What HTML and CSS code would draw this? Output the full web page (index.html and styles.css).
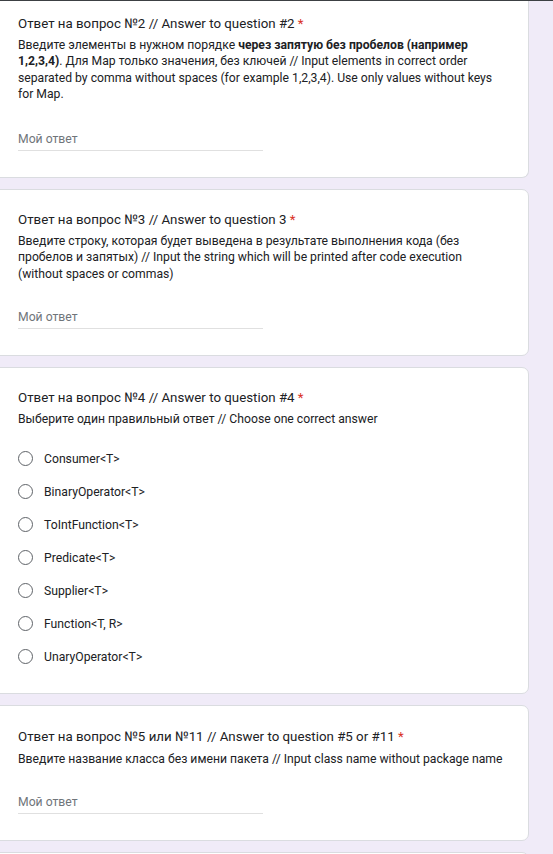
FILE: index.html
```html
<!DOCTYPE html>
<html lang="ru">
<head>
<meta charset="utf-8">
<title>Form</title>
<link rel="stylesheet" href="styles.css">
</head>
<body>
<div class="topbar"></div>
<div class="page">
  <div class="card card-first">
    <div class="q-title">Ответ на вопрос №2 // Answer to question #2 <span class="req">*</span></div>
    <div class="q-desc">Введите элементы в нужном порядке <b>через запятую без пробелов (например 1,2,3,4)</b>. Для Map только значения, без ключей // Input elements in correct order separated by comma without spaces (for example 1,2,3,4). Use only values without keys for Map.</div>
    <div class="answer answer-first">Мой ответ</div>
  </div>
  <div class="card">
    <div class="q-title">Ответ на вопрос №3 // Answer to question 3 <span class="req">*</span></div>
    <div class="q-desc">Введите строку, которая будет выведена в результате выполнения кода (без пробелов и запятых) // Input the string which will be printed after code execution (without spaces or commas)</div>
    <div class="answer">Мой ответ</div>
  </div>
  <div class="card card-radio">
    <div class="q-title">Ответ на вопрос №4 // Answer to question #4 <span class="req">*</span></div>
    <div class="q-desc">Выберите один правильный ответ // Choose one correct answer</div>
    <div class="options">
      <div class="option"><span class="radio"></span><span>Consumer&lt;T&gt;</span></div>
      <div class="option"><span class="radio"></span><span>BinaryOperator&lt;T&gt;</span></div>
      <div class="option"><span class="radio"></span><span>ToIntFunction&lt;T&gt;</span></div>
      <div class="option"><span class="radio"></span><span>Predicate&lt;T&gt;</span></div>
      <div class="option"><span class="radio"></span><span>Supplier&lt;T&gt;</span></div>
      <div class="option"><span class="radio"></span><span>Function&lt;T, R&gt;</span></div>
      <div class="option"><span class="radio"></span><span>UnaryOperator&lt;T&gt;</span></div>
    </div>
  </div>
  <div class="card card-q5">
    <div class="q-title">Ответ на вопрос №5 или №11 // Answer to question #5 or #11 <span class="req">*</span></div>
    <div class="q-desc q-desc-q5">Введите название класса без имени пакета // Input class name without package name</div>
    <div class="answer answer-q5">Мой ответ</div>
  </div>
  <div class="card card-last"></div>
</div>
</body>
</html>
```

FILE: styles.css
```css
html, body {
  margin: 0;
  padding: 0;
}
body {
  background: #f0ebf8;
  font-family: Roboto, "Noto Sans", Arial, sans-serif;
  color: #202124;
  overflow: hidden;
}
.topbar {
  height: 1px;
  background: #3c4043;
}
.page {
  display: flex;
  flex-direction: column;
  gap: 11px;
  margin-left: -7px;
  padding-right: 24px;
}
.card {
  background: #fff;
  border: 1px solid #dadce0;
  border-radius: 7px;
  padding: 21px 24px 26px 24px;
}
.card-first {
  border-top: none;
  border-top-left-radius: 0;
  border-top-right-radius: 0;
  padding-top: 14px;
}
.card-radio {
  padding-top: 21px;
  padding-bottom: 20px;
}
.card-q5 {
  padding-top: 22px;
}
.card-last {
  height: 60px;
  padding: 0;
}
.q-title {
  font-size: 13.3px;
  line-height: 18px;
}
.req {
  color: #d93025;
}
.q-desc {
  margin-top: 4px;
  font-size: 12.2px;
  line-height: 16.3px;
}
.q-desc-q5 {
  margin-top: 5px;
}
.q-desc b {
  font-weight: 700;
}
.answer {
  margin-top: 27px;
  width: 245px;
  font-size: 12.2px;
  line-height: 16px;
  color: #70757a;
  padding-bottom: 3px;
  border-bottom: 1px solid #e0e0e0;
}
.answer-first {
  margin-top: 29px;
}
.answer-q5 {
  margin-top: 26px;
}
.options {
  margin-top: 15px;
  display: flex;
  flex-direction: column;
}
.option {
  height: 33px;
  display: flex;
  align-items: center;
  gap: 11px;
  font-size: 12.2px;
}
.radio {
  width: 13px;
  height: 13px;
  border: 1.6px solid #5f6368;
  border-radius: 50%;
  flex: none;
}
```
